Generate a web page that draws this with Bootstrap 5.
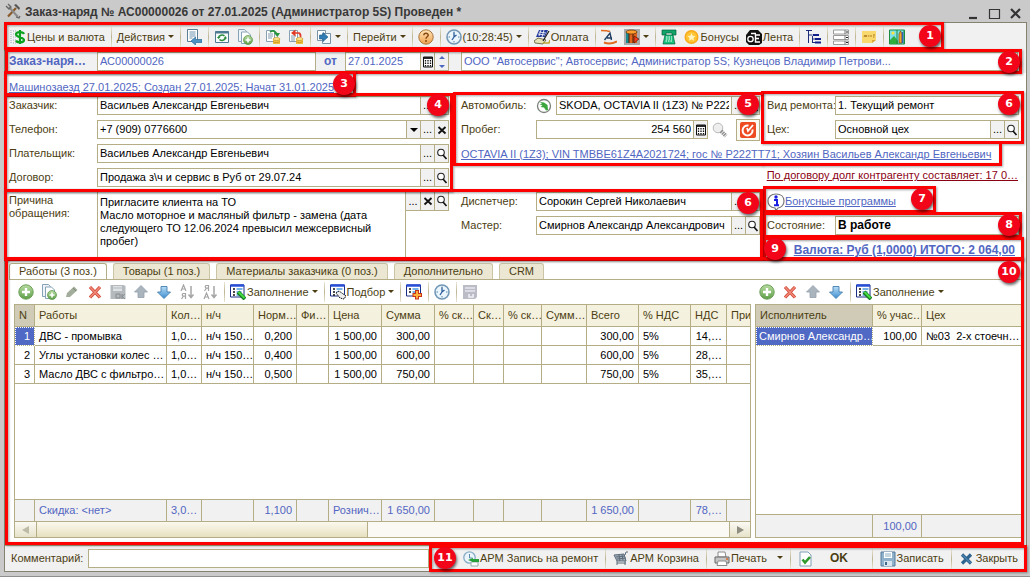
<!DOCTYPE html>
<html lang="ru">
<head>
<meta charset="utf-8">
<meta name="viewport" content="width=device-width, initial-scale=1">
<title>Заказ-наряд № АС00000026</title>
<link href="https://cdn.jsdelivr.net/npm/bootstrap@5.3.0/dist/css/bootstrap.min.css" rel="stylesheet">
<style>
  :root { --line:#b5ad85; --ink:#4c3e12; --link:#5166c2; --panel:#f1f1f1; --mark-red:#fe0000; }
  body { background:#cacaca; color:var(--ink); font:11px/13px "Liberation Sans", Arial, sans-serif; padding:0 3px 4px 4px; border-bottom:1px solid #8f8f8f; }
  button, input, textarea { font:inherit; color:inherit; border-radius:0; }
  button { background:none; border:0; padding:0; white-space:nowrap; }
  a { color:var(--link); }
  svg { display:block; flex:none; }
  .ico { width:16px; height:16px; }

  /* window */
  .titlebar { height:22px; color:#383838; font-size:12px; font-weight:bold; padding:0 1px; }
  .titlebar h1 { font:inherit; margin:0; flex:1; padding-top:2px; }
  .window-body { border:1px solid #85826f; background:#fff; min-height:0; }
  .toolbar { background:var(--panel); height:26px; padding:2px 5px 0; }
  .tool { display:inline-flex; align-items:center; gap:1px; color:var(--ink); }
  .tool.dropdown-toggle::after { border-top:3px solid var(--ink); border-left:3px solid transparent; border-right:3px solid transparent; margin:0 0 2px 2px; }
  .divider { width:1px; height:20px; margin:0 5px 0 6px; flex:none; background:linear-gradient(#e9e5d5,#bdb591,#e9e5d5); }
  .commands .divider { margin:0 7px; }
  .gap-tools > .tool + .tool { margin-left:7px; }

  /* annotation frames */
  .frame { position:absolute; inset:0; border:3px solid var(--mark-red); pointer-events:none; filter:drop-shadow(1px 1px 1px rgba(0,0,0,.35)); z-index:3; }
  .num { position:absolute; z-index:5; width:22px; height:22px; border-radius:50%; background:#f20519; color:#fff; font:bold 11px/22px "DejaVu Sans", Verdana, sans-serif; text-align:center; box-shadow:1px 2px 3px rgba(0,0,0,.6); }

  /* fields */
  .triple { display:grid; grid-template-columns:448fr 310fr 263fr; }
  .wide { grid-column:span 2; }
  .field-row { display:flex; align-items:center; height:19px; }
  .stack { display:flex; flex-direction:column; gap:5px; }
  .first-row { padding-top:2px; padding-bottom:4px; }
  .col-a { padding:0 4px; } .col-b { padding:0 3px 0 8px; } .col-c { padding:0 7px 0 4px; }
  .col-a.first-row, .col-b.first-row, .col-c.first-row { padding-top:2px; padding-bottom:5px; }
  .lab-a, .lab-b, .lab-c { white-space:nowrap; flex:none; }
  .lab-a { width:88px; } .lab-b { width:75px; } .lab-c { width:68px; }
  .entry { display:flex; flex:1; min-width:0; height:19px; border:1px solid var(--line); background:#fff; color:#000; }
  .entry input { flex:1; min-width:0; border:0; outline:0; padding:0 2px; background:transparent; }
  .entry button, .memo-tools button { width:14px; flex:none; border-left:1px solid var(--line); background:var(--panel); color:#000; display:flex; align-items:center; justify-content:center; }
  .entry.blue { color:var(--link); }
  .head-row { background:var(--panel); padding:3px 0 2px; color:var(--link); }
  .strong12 { font-size:12px; font-weight:bold; }
  .memo-label { padding-top:2px; }
  .memo { flex:1; min-width:0; border:0; border-left:1px solid var(--line); border-right:1px solid var(--line); resize:none; color:#000; padding:4px 2px; outline:0; overflow:hidden; height:66px; }
  .memo-tools { height:19px; border:1px solid var(--line); border-left:0; border-top:0; display:flex; }
  .memo-tools button:first-child { border-left:0; }
  .odd { color:#8b0012; }
  .push-btn { width:24px; height:22px; border:1px solid var(--line); background:#fbfaf3; display:flex; align-items:center; justify-content:center; }

  /* work area */
  .work { padding:1px 4px 7px; min-height:200px; }
  .nav-tabs.doc-tabs { border-bottom:1px solid var(--line); gap:6px; flex-wrap:nowrap; }
  .doc-tabs .nav-link { border:1px solid #cbc5a6; border-bottom:0; border-radius:3px 3px 0 0; background:#ebe7d2; color:var(--ink); padding:1px 9px 1px; margin:0; white-space:nowrap; }
  .doc-tabs .nav-link.active { background:#fff; color:var(--ink); margin-bottom:-1px; border-color:var(--line); }
  .grid-tools { height:24px; display:flex; align-items:center; }
  .split { display:grid; grid-template-columns:737fr 267fr; gap:4px; padding:0 0 0 5px; flex:1; min-height:0; }
  .pane { display:flex; flex-direction:column; min-width:0; }
  .sheet-box { flex:1; border:1px solid var(--line); display:flex; flex-direction:column; overflow:hidden; }
  .sheet { table-layout:fixed; width:100%; flex:1; height:1px; border-collapse:separate; border-spacing:0; color:#000; }
  .sheet th, .sheet td { border-right:1px solid var(--line); border-bottom:1px solid var(--line); padding:0 4px; overflow:hidden; white-space:nowrap; }
  .sheet tr > :last-child { border-right:0; }
  .sheet th { background:#f4f1de; color:var(--ink); font-weight:normal; height:22px; padding-right:0; }
  .sheet .cur { background:#cfcbb7; }
  .sheet tbody td { height:19px; }
  .sheet .rest td { height:auto; border-right:0; }
  .sheet tfoot td { background:var(--panel); color:var(--link); height:22px; }
  .sheet .r { text-align:right; }
  .sheet .sel { background:#4f69c4; color:#fff; outline:1px dotted #fff; outline-offset:-1px; }
  .sheet .sel:not(.r) { padding-right:0; padding-left:3px; }
  .scroll-row { height:15px; display:flex; background:#faf9f4; }
  .scroll-row button { width:21px; color:#a9a58f; background:linear-gradient(#fbfaf3,#e6e2ca); display:flex; align-items:center; justify-content:center; }
  .scroll-row .to-right { border-left:1px solid var(--line); }
  .thumb { flex:332; background:linear-gradient(#fbf9ee,#e6e0c0); border:solid var(--line); border-width:0 1px; }
  .track { flex:363; }
  .no-foot-line tfoot td { border-bottom:0; }
  .no-foot-line .rest td { border-bottom:1px solid var(--line); }

  .bottombar { background:var(--panel); height:26px; border-top:1px solid var(--line); }
  .commands { padding:0 8px 0 34px; }
  .comment-row { padding-left:6px; }
  .comment-row label { width:77px; }
</style>
</head>
<body class="d-flex flex-column vh-100">

<svg width="0" height="0" class="position-absolute" aria-hidden="true">
  <defs>
    <linearGradient id="gGreen" x2="0" y2="1"><stop stop-color="#b9dca2"/><stop offset="1" stop-color="#5d9f48"/></linearGradient>
    <linearGradient id="gBlue" x2="0" y2="1"><stop stop-color="#b8def5"/><stop offset="1" stop-color="#3c8dd0"/></linearGradient>
    <linearGradient id="gOr" x2="0" y2="1"><stop stop-color="#ffe6b8"/><stop offset="1" stop-color="#efa04d"/></linearGradient>
    <symbol id="tools" viewBox="0 0 16 16"><path d="M3 13.500 11 5" stroke="#8a5a2a" stroke-width="2.200"/><path d="M9 2l5 5 1-2-4-4z" fill="#555"/><path d="M4 4l9 10" stroke="#8a8a8a" stroke-width="2"/><path d="M1 3l3 3 2-2-3-3M11 14l3 1 1-2" fill="none" stroke="#666" stroke-width="1.300"/></symbol>
    <symbol id="dollar" viewBox="0 0 16 16"><path d="M1 1v14M3 2h4M3 5h3M3 8h3M3 11h3M3 14h4" stroke="#9aa8b8" stroke-dasharray="1 1"/><path d="M14 5C13 2.500 6 2.500 6 5.500S14 8 14 11s-7 3-8 .5M10 1v14" fill="none" stroke="#08a01c" stroke-width="2.200"/></symbol>
    <symbol id="pageback" viewBox="0 0 16 16"><path d="M1.500 .500h10v12h-10z" fill="#fff" stroke="#5c7f98"/><path d="M3.500 3h6M3.500 5h6M3.500 7h6M3.500 9h3" stroke="#6a93ad"/><path d="M5 12l4.500-4v2.500H16v3H9.500V16z" fill="#4b93c5" stroke="#2b6c99" stroke-width=".7"/></symbol>
    <symbol id="winrefresh" viewBox="0 0 16 16"><path d="M1.500 2.500h13v11h-13z" fill="#f8fcfd" stroke="#4e7b92"/><path d="M1.500 3.500h13" stroke="#4e7b92" stroke-width="2"/><path d="M4.500 8.500a3.500 3 0 0 1 6-1.500M11.500 9a3.500 3 0 0 1-6 1.500" fill="none" stroke="#2c8c3c" stroke-width="1.500"/><path d="M3 8h3.500L4.500 10zM9.500 9.500H13L11.500 7z" fill="#2c8c3c"/></symbol>
    <symbol id="copyadd" viewBox="0 0 16 16"><path d="M1.500 .500h6l2 2v10h-8z" fill="#eef4f8" stroke="#86a3b7"/><path d="M4.500 3h6l3 3v8.500h-9z" fill="#fff" stroke="#86a3b7"/><circle cx="11" cy="11" r="4.500" fill="url(#gGreen)" stroke="#559145" stroke-width=".7"/><path d="M11 8.500v5M8.500 11h5" stroke="#fff" stroke-width="1.600"/></symbol>
    <symbol id="post" viewBox="0 0 16 16"><path d="M1.500 1.500h8v11h-8z" fill="#fff" stroke="#87a0b2"/><path d="M3 5h5M3 7h5M3 9h4" stroke="#7d99ad"/><path d="M5 3c3-2 5-1 6.500 1.500" fill="none" stroke="#27933a" stroke-width="1.700"/><path d="M9 4h6l-2.500 4z" fill="#27933a"/><path d="M8 10h7v5H8z" fill="#f2c241"/><ellipse cx="11.500" cy="10" rx="3.500" ry="1.500" fill="#ffe48a" stroke="#b98a1d" stroke-width=".6"/><path d="M8 12.500c2 1.500 5 1.500 7 0" fill="none" stroke="#b98a1d" stroke-width=".7"/></symbol>
    <symbol id="unpost" viewBox="0 0 16 16"><path d="M1.500 1.500h8v11h-8z" fill="#fff" stroke="#87a0b2"/><path d="M3 7h5M3 9h4M3 11h4" stroke="#7d99ad"/><path d="M6 4h5q2 1 1.500 4" fill="none" stroke="#e23a24" stroke-width="1.700"/><path d="M7.500 .500v7L3 4z" fill="#e23a24"/><path d="M8 10h7v5H8z" fill="#f2c241"/><ellipse cx="11.500" cy="10" rx="3.500" ry="1.500" fill="#ffe48a" stroke="#b98a1d" stroke-width=".6"/><path d="M8 12.500c2 1.500 5 1.500 7 0" fill="none" stroke="#b98a1d" stroke-width=".7"/></symbol>
    <symbol id="basedon" viewBox="0 0 16 16"><path d="M1.500 1.500h8v10h-8z" fill="#fff" stroke="#7893a8"/><path d="M6.500 4.500h8v10h-8z" fill="#f5f8fa" stroke="#7893a8"/><path d="M3.500 6h3.500V3.500L12 8l-5 4.500V10H3.500z" fill="#2f7db4" stroke="#1d5a88" stroke-width=".6"/></symbol>
    <symbol id="help" viewBox="0 0 16 16"><circle cx="8" cy="8" r="7.200" fill="url(#gOr)" stroke="#a9743b"/><path d="M5.800 6.300C6 3.500 10.300 3.800 10.200 6.200 10.100 7.800 8 7.800 8 9.800" fill="none" stroke="#8a4a13" stroke-width="1.500"/><circle cx="8" cy="12" r="1" fill="#8a4a13"/></symbol>
    <symbol id="clock" viewBox="0 0 16 16"><circle cx="8" cy="8" r="7" fill="#eaf5fc" stroke="#7297b5" stroke-width="1.600"/><path d="M8 2.500v1.500M8 12v1.500M2.500 8H4M12 8h1.500" stroke="#5683a3"/><path d="M8 3.500V8l2.500-2M8 8l-2 3" fill="none" stroke="#2c5c9a" stroke-width="1.300"/></symbol>
    <symbol id="pay" viewBox="0 0 16 16"><path d="M5 1h9l-3 7H2z" fill="#243a9b"/><path d="M5 3l7 1M4 5l7 1M7 1L5 7M10 1L8 8" stroke="#fff" stroke-width=".8"/><path d="M0 12l4-3 8 2-3 4-8-1z" fill="#e6e2b8" stroke="#55502e" stroke-width=".8"/><path d="M15 2L9 12" stroke="#222" stroke-width="1.300"/><path d="M9 14h6l1-3" fill="none" stroke="#bda634" stroke-width="1.500"/></symbol>
    <symbol id="ads" viewBox="0 0 16 16"><path d="M0 1.500c3 0 6 0 9 1" stroke="#de6b21" stroke-width="1.600" fill="none"/><path d="M3 13.500c4 1.500 9 1 13-1" stroke="#de6b21" stroke-width="2" fill="none"/><path d="M3.500 11L9 4l1.500 7M6 9h5" fill="none" stroke="#1f3e63" stroke-width="1.400"/></symbol>
    <symbol id="barrel" viewBox="0 0 16 16"><path d="M0 0h16v16H0z" fill="#aaa"/><path d="M2 3h11v11H2z" fill="#e0641c"/><path d="M2 3h3v11H2z" fill="#1b8a8e"/><ellipse cx="7.500" cy="3" rx="5.500" ry="2" fill="#ff9d2d" stroke="#4d2a0b" stroke-width=".7"/><path d="M9 5v9M5 5v9" stroke="#4d1d08"/><path d="M10 7l5 3-5 4z" fill="#f23b1c" stroke="#3b140b" stroke-width=".6"/></symbol>
    <symbol id="phone" viewBox="0 0 16 16"><path d="M1 1h14v5h-4V4H5v2H1z" fill="#12a368" stroke="#066140" stroke-width=".7"/><path d="M4 6h8l2 9H2z" fill="#19c07b" stroke="#066140" stroke-width=".7"/><path d="M5 8h6M5 10h6M4.500 12h7" stroke="#fff" stroke-dasharray="1.500 1"/></symbol>
    <symbol id="star" viewBox="0 0 16 16"><circle cx="7.500" cy="8" r="7" fill="#f9a71a"/><circle cx="7.500" cy="8" r="5.600" fill="#ffc434"/><path d="M7.500 4l1.200 2.700 2.900.3-2.200 1.900.7 2.900-2.600-1.500-2.600 1.500.7-2.900L3.400 7l2.900-.3z" fill="#fff3c4"/></symbol>
    <symbol id="tape" viewBox="0 0 16 16"><path d="M4 1h8l4 4v9l-3 2H3l-3-3V6z" fill="#111"/><circle cx="4.500" cy="10" r="2.700" fill="none" stroke="#fff" stroke-width="1.300"/><path d="M5 4.500h5M14 6H9.500v7H14M9.500 9.500H13" fill="none" stroke="#fff" stroke-width="1.400"/></symbol>
    <symbol id="tree" viewBox="0 0 16 16"><path d="M1 1.500h6M3.500 2v12M3.500 6h4M7.500 7v7M7.500 10h3M7.500 13.500h3" stroke="#1c2c7a" fill="none"/><path d="M8 6h6M10 10h6M10 13.500h6" stroke="#12218a" stroke-width="2"/></symbol>
    <symbol id="list" viewBox="0 0 16 16"><path d="M.5 1h15v4H.5zM.5 6.500h15v4H.5zM.5 12h15v3.500H.5z" fill="#fff" stroke="#9a9a9a"/><path d="M12 1v4M12 6.500v4M12 12v3.500" stroke="#777"/><path d="M13 3h2M13 8.500h2M13 13.500h2" stroke="#222"/></symbol>
    <symbol id="note" viewBox="0 0 16 16"><path d="M1 2h14v9l-4 3H1z" fill="#f9d86d"/><path d="M11 14v-3h4z" fill="#d8a83a"/><path d="M3 8l1-2 1 2 1-2M7 7h1.500M10 6v2M12 6h2M12 8h1.500" stroke="#ae7a23" fill="none"/></symbol>
    <symbol id="map" viewBox="0 0 16 16"><path d="M.5 1h15v14H.5z" fill="#7fe0ea" stroke="#1c8b40"/><path d="M1 11l4-4 4 5v3H1z" fill="#2fae3e"/><circle cx="4" cy="4" r="1.600" fill="#ffe23a"/><path d="M8 1v14M15 1v14" stroke="#1c8b40"/><path d="M10 5l1.500-3L13 5v9h-3z" fill="#f3a52b" stroke="#7a4b06" stroke-width=".7"/><path d="M13.500 3v11" stroke="#375fb8" stroke-width="1.500"/></symbol>
    <symbol id="plus" viewBox="0 0 16 16"><circle cx="8" cy="8" r="7.200" fill="url(#gGreen)" stroke="#6ba058"/><path d="M8 4v8M4 8h8" stroke="#fff" stroke-width="2.400"/></symbol>
    <symbol id="pencil" viewBox="0 0 16 16"><path d="M2 13l1-4 7-6.500 3.500 3.500L6 13z" fill="#a3ad9b"/><path d="M9 4l3 3" stroke="#7c8775"/></symbol>
    <symbol id="cross" viewBox="0 0 16 16"><path d="M3 3l10 10.500M13 3L3 13.500" stroke="#cf4130" stroke-width="3.200"/><path d="M3 3l10 10.500M13 3L3 13.500" stroke="#f08a78" stroke-width="1.600"/></symbol>
    <symbol id="diskok" viewBox="0 0 16 16"><path d="M.5 1h13l2 1v13H.5z" fill="#b4b9bd"/><path d="M3 2h9v5H3z" fill="#dfe2e4"/><path d="M3 4h9" stroke="#b4b9bd"/><path d="M6 10h4v4H6zM12 10v5M15 10l-3 2.500L15 15" fill="none" stroke="#878c90"/></symbol>
    <symbol id="up" viewBox="0 0 16 16"><path d="M8 1.500l6.500 6.500H11v5.500H5V8H1.500z" fill="#a9b4bd" stroke="#93a0ab" stroke-width=".8"/></symbol>
    <symbol id="down" viewBox="0 0 16 16"><path d="M8 14.500L1.500 8H5V2.500h6V8h3.500z" fill="url(#gBlue)" stroke="#4380b1" stroke-width=".9"/></symbol>
    <symbol id="sortA" viewBox="0 0 16 16"><path d="M2 7l2.500-6L7 7M3 5h3M6.500 15V9.500H4q-1.500 1 0 2.700h2.500M4.500 12L2.500 15" fill="none" stroke="#a5a5a5" stroke-width="1.200"/><path d="M12 2v11M9.500 10.500L12 13.500l2.500-3" fill="none" stroke="#a5a5a5" stroke-width="1.500"/></symbol>
    <symbol id="sortZ" viewBox="0 0 16 16"><path d="M2 15l2.500-6L7 15M3 13h3M6.500 7V1.500H4q-1.500 1 0 2.700h2.500M4.500 4L2.500 7" fill="none" stroke="#a5a5a5" stroke-width="1.200"/><path d="M12 2v11M9.500 10.500L12 13.500l2.500-3" fill="none" stroke="#a5a5a5" stroke-width="1.500"/></symbol>
    <symbol id="fill" viewBox="0 0 16 16"><path d="M.5 1h13.500v12H.5z" fill="#fff" stroke="#1b2f86"/><path d="M.5 1.500H14" stroke="#2a50d8" stroke-width="2.500"/><path d="M3 5h2M3 8h2M3 11h2" stroke="#111" stroke-width="1.600"/><path d="M6.500 5h6M6.500 8h5M6.500 11h3" stroke="#4b9be0" stroke-width="1.400"/><path d="M8 8l7 7" stroke="#177a1e" stroke-width="4"/><path d="M8.500 8l6 6" stroke="#45dd43" stroke-width="2"/></symbol>
    <symbol id="pick" viewBox="0 0 16 16"><path d="M.5 1h14v11H.5z" fill="#fff" stroke="#1b2f86"/><path d="M.5 1.500h14" stroke="#2a50d8" stroke-width="2.500"/><path d="M3 5h2M3 8h2M3 11h2" stroke="#111" stroke-width="1.600"/><path d="M6.500 5h6M6.500 8h2" stroke="#4b9be0" stroke-width="1.400"/><path d="M6 9l3-2 7 5-2 3-4-1z" fill="#eee" stroke="#111" stroke-dasharray="1.500 .7"/></symbol>
    <symbol id="addlist" viewBox="0 0 16 16"><path d="M.5 1h14v11H.5z" fill="#fff" stroke="#1b2f86"/><path d="M.5 1.500h14" stroke="#2a50d8" stroke-width="2.500"/><path d="M3 5h2M3 8h2" stroke="#111" stroke-width="1.600"/><path d="M6.500 5h6M6.500 8h3" stroke="#4b9be0" stroke-width="1.400"/><path d="M11 6v9.500M6.500 11H16" stroke="#c8321b" stroke-width="4"/><path d="M11 7v7.500M7.500 11H15" stroke="#ffb03a" stroke-width="2"/></symbol>
    <symbol id="bookoff" viewBox="0 0 16 16"><path d="M1 1h14v12l-2 2H1z" fill="#bcbcc6"/><path d="M3 4h10M3 7h10" stroke="#e6e6ee" stroke-width="1.500"/><path d="M7 10v3h4v-3" fill="none" stroke="#efeff6" stroke-width="1.600"/></symbol>
    <symbol id="lens" viewBox="0 0 12 12"><circle cx="5" cy="4.500" r="3.300" fill="#fff" stroke="#222" stroke-width="1.100"/><path d="M7 7l3.500 4" stroke="#111" stroke-width="1.700"/></symbol>
    <symbol id="xs" viewBox="0 0 12 12"><path d="M2.500 3l7 6.500M9.500 3l-7 6.500" stroke="#111" stroke-width="1.800"/></symbol>
    <symbol id="calc" viewBox="0 0 12 12"><path d="M1.500 1h9v10h-9z" fill="#fff" stroke="#111"/><path d="M2 2h8" stroke="#111" stroke-width="1.800"/><path d="M3.500 4v6.500M6 4v6.500M8.500 4v6.500" stroke="#111" stroke-width="1.300" stroke-dasharray="1.500 1"/></symbol>
    <symbol id="brand" viewBox="0 0 16 16"><circle cx="8" cy="8" r="6.500" fill="#fff" stroke="#7b817b" stroke-width="1.300"/><path d="M4 4l4 .5 3.500 2.500.5 5-2 .5-2-3-3.500-.5 2-1.500-3-1 2.500-.5z" fill="#3aa63b"/></symbol>
    <symbol id="bulb" viewBox="0 0 16 16"><circle cx="6" cy="6" r="4.800" fill="#eee" stroke="#b9b9b9"/><path d="M9 9l5 5" stroke="#8f8f8f" stroke-width="4" stroke-dasharray="1.500 .7"/></symbol>
    <symbol id="target" viewBox="0 0 16 16"><rect width="16" height="16" rx="2" fill="#ee4b22"/><path d="M12.500 7.500a5 5 0 1 1-4-4" fill="none" stroke="#fff" stroke-width="2"/><path d="M7 6l1 3 5-6" fill="none" stroke="#fff" stroke-width="1.800"/></symbol>
    <symbol id="info" viewBox="0 0 18 18"><path d="M9 1c5 0 8 3 8 7s-3 6.500-6 7l-2 2.500L8 15c-4-.5-7-3-7-7s3-7 8-7z" fill="#fff" stroke="#777" stroke-width="1.200"/><circle cx="9" cy="4" r="1.700" fill="#1b1fe0"/><path d="M7 7h3v5M7 12.300h5" fill="none" stroke="#1b1fe0" stroke-width="2"/></symbol>
    <symbol id="rec" viewBox="0 0 16 16"><circle cx="6.500" cy="6.500" r="5.700" fill="#e9f4fb" stroke="#89adc7" stroke-width="1.300"/><path d="M6.500 3v4h3" fill="none" stroke="#5e8bab"/><path d="M8 11h7v4H8z" fill="#fff" stroke="#9aa"/><path d="M9 8h7v3H9z" fill="#27a03a"/><path d="M5 9l5-2v4z" fill="#27a03a"/></symbol>
    <symbol id="cart" viewBox="0 0 16 16"><path d="M1 4l10-1 2 7H4z" fill="#a2adb8" stroke="#5d6c7b"/><path d="M3 6l9-1M4 8l9-1M6 4l1 6M9 3.500l1 6M12 4l1-3h2M4 10v4M12 10v4M4 12h9" fill="none" stroke="#5d6c7b"/></symbol>
    <symbol id="printer" viewBox="0 0 16 16"><path d="M4 1h7l1 5H4z" fill="#fff" stroke="#8b8b8b"/><path d="M1 6h14v6H1z" fill="#c6c6c6" stroke="#666"/><path d="M4 10h8l1 4.500H3z" fill="#fff" stroke="#8b8b8b"/><path d="M12 8h2" stroke="#d6661f" stroke-width="1.600"/></symbol>
    <symbol id="docok" viewBox="0 0 16 16"><path d="M2 1h8l3 3v11H2z" fill="#fff" stroke="#7fa0b7"/><path d="M4.500 8.500L7 11.500l5-5.500" fill="none" stroke="#2d9b2d" stroke-width="2.600"/></symbol>
    <symbol id="disk" viewBox="0 0 16 16"><path d="M1 1h14v14H1z" fill="#8fb1cb" stroke="#55799a"/><path d="M4 1h8v6H4z" fill="#fff"/><path d="M5 3h6M5 5h6" stroke="#8badc4"/><path d="M4 10h8v5H4z" fill="#d9e5ee"/><path d="M5 11h2v3H5z" fill="#41698b"/></symbol>
    <symbol id="close" viewBox="0 0 16 16"><path d="M3 3.500l9 9M12 3.500l-9 9" stroke="#2f6590" stroke-width="3.200"/><path d="M3.500 4l8 8" stroke="#5f98c4" stroke-width="1"/></symbol>
  </defs>
</svg>

<header class="titlebar d-flex align-items-center">
  <svg class="ico me-1"><use href="#tools"/></svg>
  <h1>Заказ-наряд № АС00000026 от 27.01.2025 (Администратор 5S) Проведен *</h1>
  <div class="d-flex gap-2 pt-1 pe-1">
    <button aria-label="Свернуть"><svg width="13" height="13"><path d="M2 11h8" stroke="#333" stroke-width="2.200"/></svg></button>
    <button aria-label="Развернуть"><svg width="13" height="13"><path d="M1.500 2.500h10v9h-10z" fill="none" stroke="#333" stroke-width="1.200"/></svg></button>
    <button aria-label="Закрыть окно"><svg width="13" height="13"><path d="M2 2l9 9M11 2l-9 9" stroke="#333" stroke-width="2.200"/></svg></button>
  </div>
</header>

<main class="window-body flex-grow-1 d-flex flex-column">
  <!-- 1: command bar -->
  <div class="position-relative">
    <div class="toolbar gap-tools d-flex align-items-center" role="toolbar" aria-label="Команды документа">
      <button class="tool"><svg class="ico"><use href="#dollar"/></svg>Цены и валюта</button><i class="divider"></i>
      <button class="tool dropdown-toggle">Действия</button><i class="divider"></i>
      <button class="tool" aria-label="Перейти к списку"><svg class="ico"><use href="#pageback"/></svg></button><i class="divider"></i>
      <button class="tool" aria-label="Обновить"><svg class="ico"><use href="#winrefresh"/></svg></button>
      <button class="tool" aria-label="Скопировать"><svg class="ico"><use href="#copyadd"/></svg></button><i class="divider"></i>
      <button class="tool" aria-label="Провести"><svg class="ico"><use href="#post"/></svg></button>
      <button class="tool" aria-label="Отменить проведение"><svg class="ico"><use href="#unpost"/></svg></button><i class="divider"></i>
      <button class="tool dropdown-toggle" aria-label="Ввести на основании"><svg class="ico"><use href="#basedon"/></svg></button><i class="divider"></i>
      <button class="tool dropdown-toggle">Перейти</button><i class="divider"></i>
      <button class="tool" aria-label="Справка"><svg class="ico"><use href="#help"/></svg></button><i class="divider"></i>
      <button class="tool dropdown-toggle"><svg class="ico"><use href="#clock"/></svg>(10:28:45)</button><i class="divider"></i>
      <button class="tool"><svg class="ico"><use href="#pay"/></svg>Оплата</button><i class="divider"></i>
      <button class="tool" aria-label="Реклама"><svg class="ico"><use href="#ads"/></svg></button>
      <button class="tool dropdown-toggle" aria-label="Склад"><svg class="ico"><use href="#barrel"/></svg></button><i class="divider"></i>
      <button class="tool" aria-label="Звонок"><svg class="ico"><use href="#phone"/></svg></button>
      <button class="tool"><svg class="ico"><use href="#star"/></svg>Бонусы</button>
      <button class="tool"><svg class="ico"><use href="#tape"/></svg>Лента</button><i class="divider"></i>
      <button class="tool" aria-label="Структура"><svg class="ico"><use href="#tree"/></svg></button><i class="divider"></i>
      <button class="tool" aria-label="Список"><svg class="ico"><use href="#list"/></svg></button><i class="divider"></i>
      <button class="tool" aria-label="Заметка"><svg class="ico"><use href="#note"/></svg></button><i class="divider"></i>
      <button class="tool" aria-label="Карта"><svg class="ico"><use href="#map"/></svg></button>
    </div>
    <div class="frame" style="right:8%;left:-1px;bottom:-1px;top:-1px"></div><span class="num" style="right:85px;top:2px">1</span>
  </div>

  <!-- 2: number, date, organisation -->
  <div class="position-relative">
    <div class="head-row triple">
      <div class="col-a field-row">
        <label class="lab-a strong12" for="docno">Заказ-наря…</label>
        <div class="entry blue"><input id="docno" value="АС00000026"></div>
        <label class="strong12 px-2" for="docdate">от</label>
        <div class="entry blue flex-grow-0 flex-shrink-0" style="flex-basis:104px"><input id="docdate" value="27.01.2025">
          <button aria-label="Календарь"><svg width="12" height="12"><use href="#calc"/></svg></button>
          <button aria-label="Изменить дату"><svg width="8" height="14"><path d="M1 4l3-3 3 3zM1 10l3 3 3-3z" fill="#4d68c0"/></svg></button></div>
      </div>
      <div class="wide field-row ps-2 pe-2"><div class="entry blue"><input aria-label="Организация" value="ООО &quot;Автосервис&quot;; Автосервис; Администратор 5S; Кузнецов Владимир Петрови..."></div></div>
    </div>
    <div class="frame" style="right:4px;top:0;bottom:-1px"></div><span class="num" style="right:6px;top:2px">2</span>
  </div>

  <!-- 3: visit state -->
  <div class="triple">
    <div class="position-relative col-a">
      <a href="#visit" class="d-block pt-2 text-nowrap">Машинозаезд 27.01.2025; Создан 27.01.2025; Начат 31.01.2025</a>
      <div class="frame" style="right:97px;left:-1px;top:-2px;bottom:-3px"></div><span class="num" style="right:98px;top:0">3</span>
    </div>
  </div>

  <!-- 4, 5, 6: customer, vehicle, repair kind -->
  <div class="triple">
    <div class="position-relative col-a stack first-row">
      <div class="field-row"><label class="lab-a" for="cust">Заказчик:</label><div class="entry"><input id="cust" value="Васильев Александр Евгеньевич"><button>...</button><button aria-label="Открыть"><svg width="12" height="12"><use href="#lens"/></svg></button></div></div>
      <div class="field-row"><label class="lab-a" for="tel">Телефон:</label><div class="entry"><input id="tel" value="+7 (909) 0776600"><button aria-label="Выбрать из списка"><svg width="8" height="6"><path d="M0 1h8L4 5z"/></svg></button><button>...</button><button aria-label="Очистить"><svg width="12" height="12"><use href="#xs"/></svg></button></div></div>
      <div class="field-row"><label class="lab-a" for="payer">Плательщик:</label><div class="entry"><input id="payer" value="Васильев Александр Евгеньевич"><button>...</button><button aria-label="Открыть"><svg width="12" height="12"><use href="#lens"/></svg></button></div></div>
      <div class="field-row"><label class="lab-a" for="contract">Договор:</label><div class="entry"><input id="contract" value="Продажа з\ч и сервис в Руб от 29.07.24"><button>...</button><button aria-label="Открыть"><svg width="12" height="12"><use href="#lens"/></svg></button></div></div>
      <div class="frame" style="left:-1px;top:-1px"></div><span class="num" style="right:4px;top:0">4</span>
    </div>
    <div class="wide">
      <div class="position-relative">
        <div class="d-grid" style="grid-template-columns:310fr 263fr">
          <div class="position-relative col-b stack first-row">
            <div class="field-row"><label class="lab-b" for="car">Автомобиль:</label><svg class="ico me-1"><use href="#brand"/></svg><div class="entry"><input id="car" value="SKODA, OCTAVIA II (1Z3) № Р222"><button>...</button><button aria-label="Открыть"><svg width="12" height="12"><use href="#lens"/></svg></button></div></div>
            <div class="field-row"><label class="lab-b" for="run">Пробег:</label><div class="entry"><input id="run" class="text-end" value="254 560"><button aria-label="Калькулятор"><svg width="12" height="12"><use href="#calc"/></svg></button></div><svg class="ico mx-1"><use href="#bulb"/></svg><button class="push-btn ms-1" aria-label="Проверить"><svg class="ico"><use href="#target"/></svg></button></div>
            <span class="num" style="right:4px;top:-1px">5</span>
          </div>
          <div class="position-relative col-c stack first-row">
            <div class="field-row"><label class="lab-c" for="kind">Вид ремонта:</label><div class="entry"><input id="kind" value="1. Текущий ремонт"></div></div>
            <div class="field-row"><label class="lab-c" for="shop">Цех:</label><div class="entry"><input id="shop" value="Основной цех"><button>...</button><button aria-label="Открыть"><svg width="12" height="12"><use href="#lens"/></svg></button></div></div>
            <div class="frame" style="left:-2px;right:2px;top:-3px;bottom:0"></div><span class="num" style="right:6px;top:-1px">6</span>
          </div>
        </div>
        <div class="ps-2 pt-1 pb-2"><a href="#car" class="text-nowrap">OCTAVIA II (1Z3); VIN TMBBE61Z4A2021724; гос № Р222ТТ71; Хозяин Васильев Александр Евгеньевич</a></div>
        <div class="frame" style="right:263px;top:-2px;border-right:0;bottom:3px"></div>
        <div class="frame" style="left:auto;right:24px;top:50px;width:240px;border-left:0;border-top:0;bottom:3px"></div>
      </div>
      <div class="text-end pe-2"><a href="#debt" class="odd text-nowrap">По договору долг контрагенту составляет: 17 0…</a></div>
    </div>
  </div>

  <!-- 6..9: reason, people, state, total -->
  <div class="triple position-relative">
    <div class="col-a d-flex">
      <label class="lab-a memo-label" for="reason">Причина<br>обращения:</label>
      <textarea id="reason" class="memo" rows="4">Пригласите клиента на ТО
Масло моторное и масляный фильтр - замена (дата
следующего ТО 12.06.2024 превысил межсервисный
пробег)</textarea>
      <div class="memo-tools"><button>...</button><button aria-label="Очистить"><svg width="12" height="12"><use href="#xs"/></svg></button><button aria-label="Открыть"><svg width="12" height="12"><use href="#lens"/></svg></button></div>
    </div>
    <div class="position-relative col-b stack">
      <div class="field-row"><label class="lab-b" for="disp">Диспетчер:</label><div class="entry"><input id="disp" value="Сорокин Сергей Николаевич"><button>...</button><button aria-label="Открыть"><svg width="12" height="12"><use href="#lens"/></svg></button></div></div>
      <div class="field-row"><label class="lab-b" for="mast">Мастер:</label><div class="entry"><input id="mast" value="Смирнов Александр Александрович"><button>...</button><button aria-label="Открыть"><svg width="12" height="12"><use href="#lens"/></svg></button></div></div>
      <span class="num" style="right:4px;top:0">6</span>
    </div>
    <div class="col-c stack">
      <div class="position-relative field-row"><svg width="18" height="18"><use href="#info"/></svg><a href="#bonus">Бонусные программы</a>
        <div class="frame" style="left:-4px;right:83px;top:-6px;bottom:-2px"></div><span class="num" style="right:86px;top:-4px">7</span></div>
      <div class="position-relative field-row"><label class="lab-c" for="state">Состояние:</label><div class="entry"><input id="state" class="strong12" value="В работе"></div>
        <div class="frame" style="left:-4px;right:-3px;top:-4px;bottom:-3px"></div><span class="num" style="right:-1px;top:-2px">8</span></div>
      <div class="position-relative text-end pe-1 pt-1"><a href="#total" class="strong12 text-nowrap">Валюта: Руб (1,0000) ИТОГО: 2 064,00</a>
        <div class="frame" style="left:-4px;right:-5px;top:-3px;bottom:-4px"></div><span class="num" style="left:-3px;top:-2px">9</span></div>
    </div>
    <div class="frame" style="left:-1px;right:263px;top:-3px;bottom:-3px"></div>
  </div>

  <!-- 10: tabular sections -->
  <section class="work position-relative flex-grow-1 d-flex flex-column">
    <ul class="nav nav-tabs doc-tabs mt-1">
      <li class="nav-item"><a class="nav-link active" href="#works">Работы (3 поз.)</a></li>
      <li class="nav-item"><a class="nav-link" href="#goods">Товары (1 поз.)</a></li>
      <li class="nav-item"><a class="nav-link" href="#materials">Материалы заказчика (0 поз.)</a></li>
      <li class="nav-item"><a class="nav-link" href="#extra">Дополнительно</a></li>
      <li class="nav-item"><a class="nav-link" href="#crm">CRM</a></li>
    </ul>
    <div class="split">
      <div class="pane">
        <div class="grid-tools gap-tools ps-1" role="toolbar" aria-label="Работы">
          <button class="tool" aria-label="Добавить"><svg class="ico"><use href="#plus"/></svg></button>
          <button class="tool" aria-label="Скопировать"><svg class="ico"><use href="#copyadd"/></svg></button>
          <button class="tool" aria-label="Изменить"><svg class="ico"><use href="#pencil"/></svg></button>
          <button class="tool" aria-label="Удалить"><svg class="ico"><use href="#cross"/></svg></button>
          <button class="tool" aria-label="Закончить"><svg class="ico"><use href="#diskok"/></svg></button>
          <button class="tool" aria-label="Вверх"><svg class="ico"><use href="#up"/></svg></button>
          <button class="tool" aria-label="Вниз"><svg class="ico"><use href="#down"/></svg></button>
          <button class="tool" aria-label="По возрастанию"><svg class="ico"><use href="#sortA"/></svg></button>
          <button class="tool" aria-label="По убыванию"><svg class="ico"><use href="#sortZ"/></svg></button><i class="divider"></i>
          <button class="tool dropdown-toggle"><svg class="ico"><use href="#fill"/></svg>Заполнение</button><i class="divider"></i>
          <button class="tool dropdown-toggle"><svg class="ico"><use href="#pick"/></svg>Подбор</button><i class="divider"></i>
          <button class="tool" aria-label="Добавить списком"><svg class="ico"><use href="#addlist"/></svg></button><i class="divider"></i>
          <button class="tool" aria-label="Время"><svg class="ico"><use href="#clock"/></svg></button><i class="divider"></i>
          <button class="tool" aria-label="Справочник"><svg class="ico"><use href="#bookoff"/></svg></button>
        </div>
        <div class="sheet-box">
          <table class="sheet">
            <colgroup><col style="width:20px"><col><col style="width:35px"><col style="width:52px"><col style="width:43px"><col style="width:32px"><col style="width:53px"><col style="width:53px"><col style="width:39px"><col style="width:30px"><col style="width:38px"><col style="width:45px"><col style="width:52px"><col style="width:52px"><col style="width:36px"><col style="width:23px"></colgroup>
            <thead><tr><th class="cur">N</th><th>Работы</th><th>Кол…</th><th>н/ч</th><th>Норм…</th><th>Фи…</th><th>Цена</th><th>Сумма</th><th>% ск…</th><th>Ск…</th><th>% ск…</th><th>Сумм…</th><th>Всего</th><th>% НДС</th><th>НДС</th><th>При</th></tr></thead>
            <tbody>
              <tr><td class="r sel">1</td><td>ДВС - промывка</td><td class="r">1,0…</td><td>н/ч 150…</td><td class="r">0,200</td><td></td><td class="r">1 500,00</td><td class="r">300,00</td><td></td><td></td><td></td><td></td><td class="r">300,00</td><td>5%</td><td class="r">14,…</td><td></td></tr>
              <tr><td class="r">2</td><td>Углы установки колес …</td><td class="r">1,0…</td><td>н/ч 150…</td><td class="r">0,400</td><td></td><td class="r">1 500,00</td><td class="r">600,00</td><td></td><td></td><td></td><td></td><td class="r">600,00</td><td>5%</td><td class="r">28,…</td><td></td></tr>
              <tr><td class="r">3</td><td>Масло ДВС с фильтро…</td><td class="r">1,0…</td><td>н/ч 150…</td><td class="r">0,500</td><td></td><td class="r">1 500,00</td><td class="r">750,00</td><td></td><td></td><td></td><td></td><td class="r">750,00</td><td>5%</td><td class="r">35,…</td><td></td></tr>
              <tr class="rest"><td colspan="16"></td></tr>
            </tbody>
            <tfoot><tr><td></td><td>Скидка: &lt;нет&gt;</td><td class="r">3,0…</td><td></td><td class="r">1,100</td><td></td><td>Рознич…</td><td class="r">1 650,00</td><td></td><td></td><td></td><td></td><td class="r">1 650,00</td><td></td><td class="r">78,…</td><td></td></tr></tfoot>
          </table>
          <div class="scroll-row"><button aria-label="Влево"><svg width="8" height="8"><path d="M7 0v8L0 4z" fill="#bdbaa6"/></svg></button><div class="thumb"></div><div class="track"></div><button class="to-right" aria-label="Вправо"><svg width="8" height="8"><path d="M1 0v8l7-4z" fill="#8f8d80"/></svg></button></div>
        </div>
      </div>
      <div class="pane">
        <div class="grid-tools gap-tools ps-1" role="toolbar" aria-label="Исполнители">
          <button class="tool" aria-label="Добавить"><svg class="ico"><use href="#plus"/></svg></button>
          <button class="tool" aria-label="Удалить"><svg class="ico"><use href="#cross"/></svg></button>
          <button class="tool" aria-label="Вверх"><svg class="ico"><use href="#up"/></svg></button>
          <button class="tool" aria-label="Вниз"><svg class="ico"><use href="#down"/></svg></button><i class="divider"></i>
          <button class="tool dropdown-toggle"><svg class="ico"><use href="#fill"/></svg>Заполнение</button>
        </div>
        <div class="sheet-box">
          <table class="sheet no-foot-line">
            <colgroup><col><col style="width:49px"><col style="width:99px"></colgroup>
            <thead><tr><th class="cur">Исполнитель</th><th>% учас…</th><th>Цех</th></tr></thead>
            <tbody><tr><td class="sel">Смирнов Александр…</td><td class="r">100,00</td><td>№03&nbsp; 2-х стоечн…</td></tr><tr class="rest"><td colspan="3"></td></tr></tbody>
            <tfoot><tr><td></td><td class="r">100,00</td><td></td></tr></tfoot>
          </table>
        </div>
      </div>
    </div>
    <div class="frame" style="right:2px;top:-1px"></div><span class="num" style="right:6px;top:3px">10</span>
  </section>

  <!-- 11: comment and closing commands -->
  <footer class="bottombar triple" style="grid-template-columns:424fr 597fr">
    <div class="field-row h-100 comment-row"><label for="comment">Комментарий:</label><div class="entry"><input id="comment"></div></div>
    <div class="position-relative">
      <div class="commands d-flex align-items-center h-100">
        <button class="tool"><svg class="ico"><use href="#rec"/></svg>АРМ Запись на ремонт</button><i class="divider"></i>
        <button class="tool"><svg class="ico"><use href="#cart"/></svg>АРМ Корзина</button><i class="divider"></i>
        <button class="tool"><svg class="ico"><use href="#printer"/></svg>Печать</button><button class="tool dropdown-toggle ms-2" aria-label="Варианты печати"></button><i class="divider"></i>
        <button class="tool strong12 gap-3"><svg class="ico"><use href="#docok"/></svg>OK</button><i class="divider ms-auto"></i>
        <button class="tool"><svg class="ico"><use href="#disk"/></svg>Записать</button><i class="divider"></i>
        <button class="tool"><svg class="ico"><use href="#close"/></svg>Закрыть</button>
      </div>
      <div class="frame" style="right:-1px;top:-1px;bottom:-1px"></div><span class="num" style="left:5px;top:1px">11</span>
    </div>
  </footer>
</main>
<script src="https://cdn.jsdelivr.net/npm/bootstrap@5.3.0/dist/js/bootstrap.bundle.min.js"></script>
</body>
</html>
